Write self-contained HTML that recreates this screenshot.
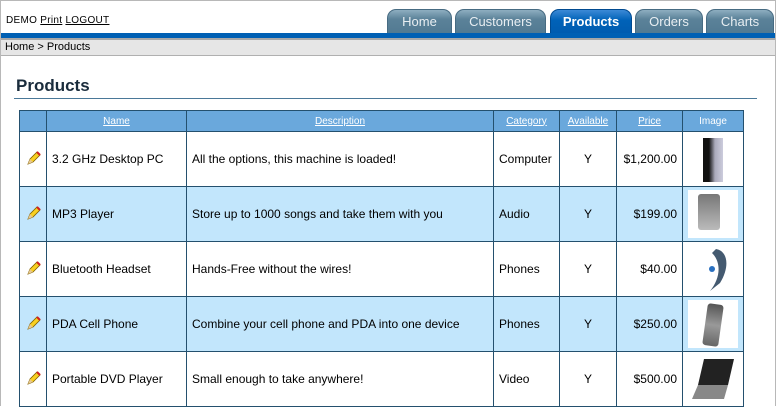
<!DOCTYPE html>
<html><head><meta charset="utf-8"><style>
*{margin:0;padding:0;box-sizing:border-box}
body{width:776px;height:406px;overflow:hidden;background:#fff;font-family:"Liberation Sans",Arial,sans-serif;position:relative}
.frame{position:absolute;left:0;top:0;width:776px;height:406px;border:1px solid #b8b8b8;border-bottom:none}
.top{position:absolute;left:6px;top:15px;font-size:10px;color:#000;letter-spacing:.3px}
.top u{text-decoration:underline}
.bar{position:absolute;left:1px;top:33px;width:774px;height:5px;background:#0060b4}
.sh{position:absolute;left:1px;top:38px;width:774px;height:2px;background:#a8a8a8}
.crumb{position:absolute;left:1px;top:40px;width:774px;height:16px;background:#e6e6e6;border-bottom:1px solid #b0b0b0;font-size:11px;padding-left:4px;line-height:15px}
.tab{position:absolute;top:9px;height:24px;border-radius:9px 9px 0 0;background:linear-gradient(#8eaec0,#5b8299 40%,#527a92);color:#e8eef2;font-size:13px;text-align:center;line-height:24px;border:1px solid #476b82;border-bottom:none}
.tab.on{background:linear-gradient(#3c8ad6,#0062b8 45%,#005cb0);color:#fff;font-weight:bold;border-color:#004a90}
h1{position:absolute;left:16px;top:76px;font-size:17px;color:#1a2c3c;font-weight:bold}
.hl{position:absolute;left:14px;top:98px;width:743px;height:1px;background:#4a7898}
table{position:absolute;left:19px;top:110px;border-collapse:collapse;font-size:12px}
td,th{border:1px solid #24506e;padding:0 5px}
th{background:#6aa8dc;color:#fff;font-weight:normal;font-size:10px;height:21px}
th u{color:#fff}
td{height:55px;color:#000}
tr.a td{background:#c2e6fc}
.c{text-align:center}.r{text-align:right}
.img{width:50px;height:48px;margin:0 auto;position:relative}
tr.a .img{background:#fff}
</style></head><body>
<div class="frame"></div>
<div class="top">DEMO <u>Print</u> <u>LOGOUT</u></div>
<div class="tab" style="left:387px;width:65px">Home</div>
<div class="tab" style="left:455px;width:91px">Customers</div>
<div class="tab on" style="left:550px;width:82px">Products</div>
<div class="tab" style="left:635px;width:68px">Orders</div>
<div class="tab" style="left:706px;width:68px">Charts</div>
<div class="bar"></div><div class="sh"></div>
<div class="crumb">Home &gt; Products</div>
<h1>Products</h1><div class="hl"></div>
<table>
<tr><th style="width:27px"></th><th style="width:140px"><u>Name</u></th><th style="width:307px"><u>Description</u></th><th style="width:66px"><u>Category</u></th><th style="width:57px"><u>Available</u></th><th style="width:66px"><u>Price</u></th><th style="width:61px">Image</th></tr>
<tr><td class="c"><svg width="16" height="16"><path d="M3 14l2-5 7-7 3 3-7 7z" fill="#f8d020" stroke="#806000" stroke-width=".8"/><path d="M12 2l3 3" stroke="#d02020" stroke-width="2"/><path d="M3 14l2-5 3 3z" fill="#e8c890"/></svg></td><td>3.2 GHz Desktop PC</td><td>All the options, this machine is loaded!</td><td>Computer</td><td class="c">Y</td><td class="r">$1,200.00</td><td><div class="img"><div style="position:absolute;left:15px;top:3px;width:20px;height:44px;background:linear-gradient(90deg,#111 30%,#aab 60%,#ccd)"></div></div></td></tr>
<tr class="a"><td class="c"><svg width="16" height="16"><path d="M3 14l2-5 7-7 3 3-7 7z" fill="#f8d020" stroke="#806000" stroke-width=".8"/><path d="M12 2l3 3" stroke="#d02020" stroke-width="2"/><path d="M3 14l2-5 3 3z" fill="#e8c890"/></svg></td><td>MP3 Player</td><td>Store up to 1000 songs and take them with you</td><td>Audio</td><td class="c">Y</td><td class="r">$199.00</td><td><div class="img"><div style="position:absolute;left:10px;top:4px;width:22px;height:36px;background:linear-gradient(#777,#bbb);border-radius:3px"></div></div></td></tr>
<tr><td class="c"><svg width="16" height="16"><path d="M3 14l2-5 7-7 3 3-7 7z" fill="#f8d020" stroke="#806000" stroke-width=".8"/><path d="M12 2l3 3" stroke="#d02020" stroke-width="2"/><path d="M3 14l2-5 3 3z" fill="#e8c890"/></svg></td><td>Bluetooth Headset</td><td>Hands-Free without the wires!</td><td>Phones</td><td class="c">Y</td><td class="r">$40.00</td><td><div class="img"><svg width="50" height="48"><path d="M28 4c12 2 14 18 4 34l-10 8c10-12 12-28 2-38z" fill="#445a70"/><circle cx="24" cy="24" r="3" fill="#2a70c0"/></svg></div></td></tr>
<tr class="a"><td class="c"><svg width="16" height="16"><path d="M3 14l2-5 7-7 3 3-7 7z" fill="#f8d020" stroke="#806000" stroke-width=".8"/><path d="M12 2l3 3" stroke="#d02020" stroke-width="2"/><path d="M3 14l2-5 3 3z" fill="#e8c890"/></svg></td><td>PDA Cell Phone</td><td>Combine your cell phone and PDA into one device</td><td>Phones</td><td class="c">Y</td><td class="r">$250.00</td><td><div class="img"><div style="position:absolute;left:17px;top:4px;width:16px;height:42px;background:linear-gradient(#555,#999,#666);border-radius:3px;transform:rotate(8deg)"></div></div></td></tr>
<tr><td class="c"><svg width="16" height="16"><path d="M3 14l2-5 7-7 3 3-7 7z" fill="#f8d020" stroke="#806000" stroke-width=".8"/><path d="M12 2l3 3" stroke="#d02020" stroke-width="2"/><path d="M3 14l2-5 3 3z" fill="#e8c890"/></svg></td><td>Portable DVD Player</td><td>Small enough to take anywhere!</td><td>Video</td><td class="c">Y</td><td class="r">$500.00</td><td><div class="img"><svg width="50" height="48"><path d="M16 4h30l-6 26h-30z" fill="#222"/><path d="M10 30h30l-4 14h-32z" fill="#888"/></svg></div></td></tr>
</table>
</body></html>
